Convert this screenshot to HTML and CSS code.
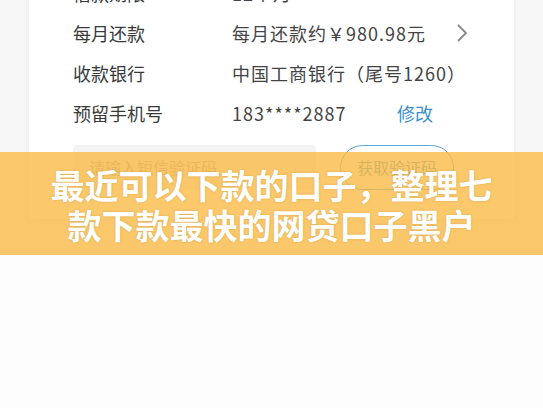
FILE: index.html
```html
<!DOCTYPE html>
<html lang="zh-CN">
<head>
    <meta charset="UTF-8">
    <meta name="viewport" content="width=device-width, initial-scale=1.0">
    <title>最近可以下款的口子</title>
    <link rel="stylesheet" href="styles.css">
</head>
<body>
    <div class="page">
        <div class="card">
            <div class="row">
                <span class="label">借款期限</span>
                <span class="value">12个月</span>
            </div>
            <div class="row">
                <span class="label">每月还款</span>
                <span class="value">每月还款约￥980.98元</span>
                <svg class="chevron" width="12" height="20" viewBox="0 0 12 20"><path d="M2 2 L10 10 L2 18" fill="none" stroke="#8a8a8a" stroke-width="1.8"/></svg>
            </div>
            <div class="row">
                <span class="label">收款银行</span>
                <span class="value">中国工商银行（尾号1260）</span>
            </div>
            <div class="row">
                <span class="label">预留手机号</span>
                <span class="value phone">183****2887</span>
                <span class="link">修改</span>
            </div>
            <div class="code-row">
                <div class="code-input">请输入短信验证码</div>
                <div class="code-btn">获取验证码</div>
            </div>
        </div>
    </div>

    <!-- the title banner over the screenshot -->
    <div class="banner">
        <p>最近可以下款的口子，整理七<br>款下款最快的网贷口子黑户</p>
    </div>
</body>
</html>
```

FILE: styles.css
```css
body {
    margin: 0;
    background-color: #fdfdfd;
    font-family: "Noto Sans CJK SC", "Noto Sans", sans-serif;
    overflow: hidden;
}
.page {
    height: 255px;
    background-color: #f7f7f7;
    overflow: hidden;
}
.card {
    margin-left: 29px;
    width: 485px;
    margin-top: -27px;
    padding-left: 44px;
    padding-right: 46px;
    box-sizing: border-box;
    background-color: #fff;
    box-shadow: 0 0 6px rgba(0, 0, 0, 0.06);
    padding-bottom: 29px;
}
.row {
    display: flex;
    align-items: center;
    height: 40px;
    font-size: 18px;
    color: #3a3a3a;
}
.label {
    width: 159px;
    flex-shrink: 0;
}
.value {
    color: #444;
    letter-spacing: 1px;
}
.phone {
    width: 165px;
}
.chevron {
    margin-left: auto;
}
.link {
    color: #3b8fcf;
}
.code-row {
    display: flex;
    align-items: center;
    margin-top: 12px;
}
.code-input {
    width: 243px;
    height: 45px;
    line-height: 45px;
    background-color: #f3f3f3;
    border-radius: 4px;
    padding-left: 16px;
    box-sizing: border-box;
    font-size: 16px;
    color: #aaa;
}
.code-btn {
    margin-left: 24px;
    width: 114px;
    height: 45px;
    line-height: 43px;
    box-sizing: border-box;
    border: 1.5px solid #5aa6d6;
    border-radius: 23px;
    text-align: center;
    font-size: 16px;
    color: #4a8fc4;
}
.banner {
    position: absolute;
    left: 0;
    top: 152px;
    width: 100%;
    height: 103px;
    background-color: rgba(250, 188, 70, 0.8);
    display: flex;
    align-items: center;
    justify-content: center;
}
.banner p {
    margin: 0;
    padding-top: 2px;
    color: #fff;
    font-size: 34px;
    font-weight: bold;
    line-height: 40px;
    text-align: center;
    text-shadow: 0 0 2px rgba(120, 80, 0, 0.3);
}
```
